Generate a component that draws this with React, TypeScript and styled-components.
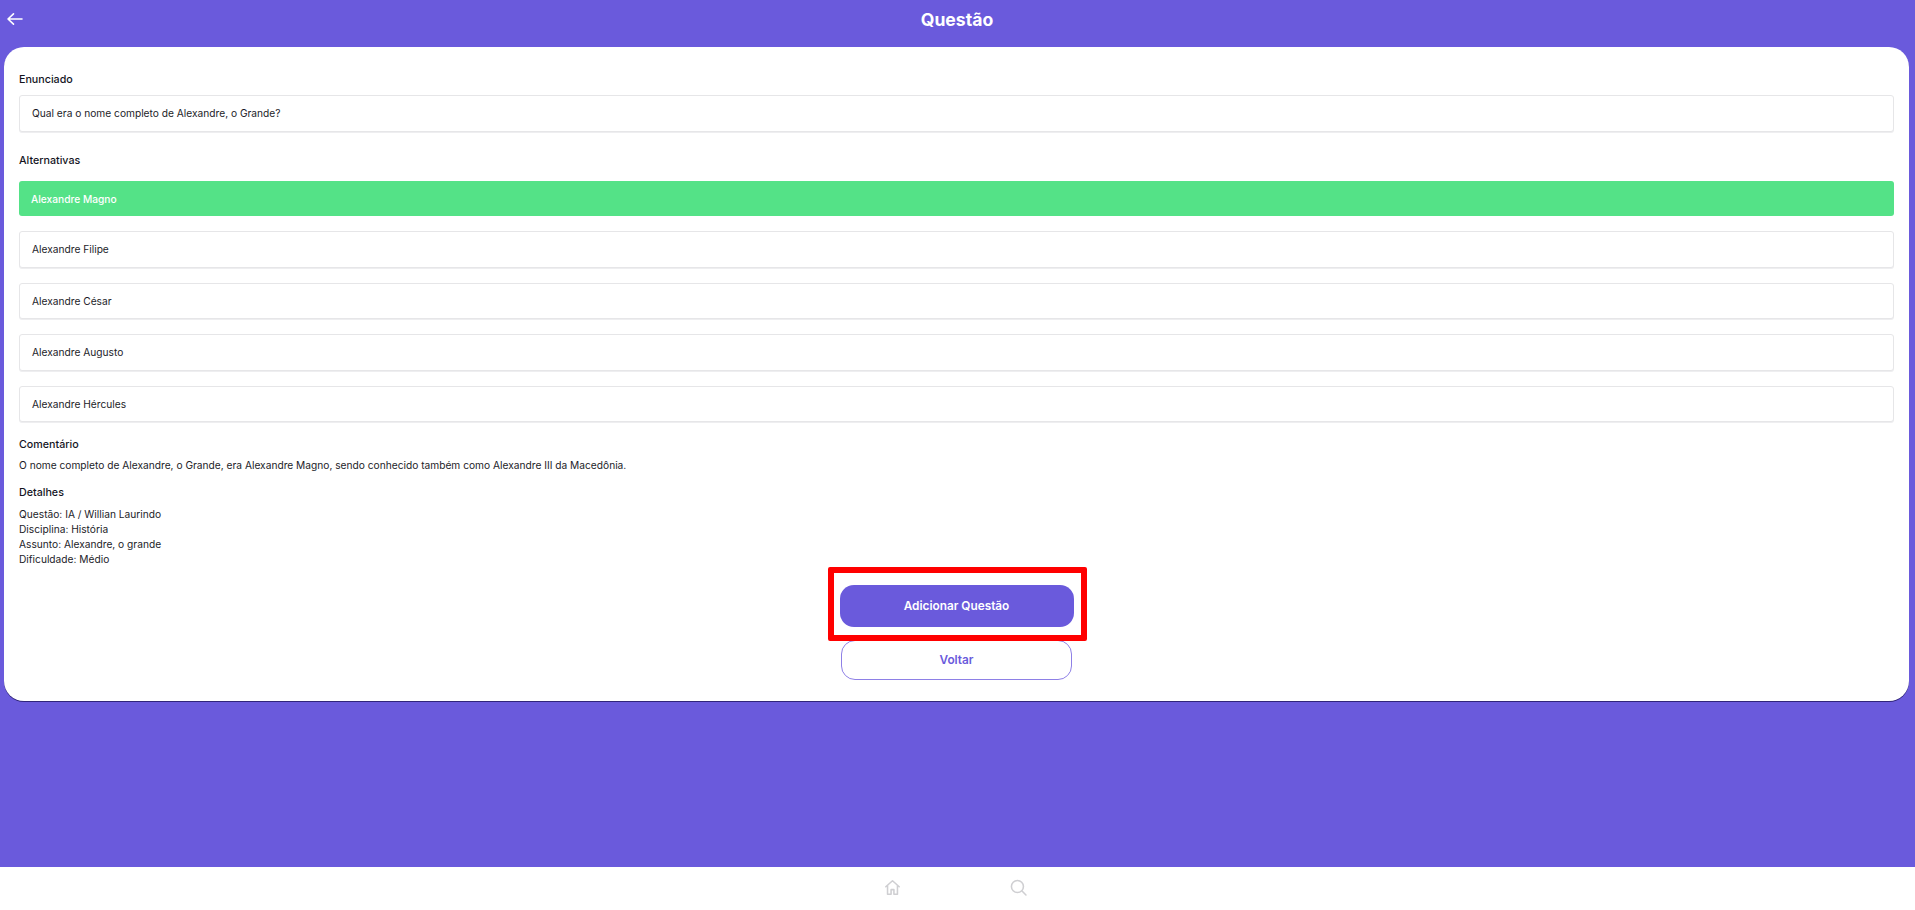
import React from "react";
import styled, { createGlobalStyle } from "styled-components";

const Global = createGlobalStyle`
  html, body { margin: 0; padding: 0; height: 100%; }
  body { font-family: Inter, Roboto, "Liberation Sans", sans-serif; background: #6a5adc; }
  * { box-sizing: border-box; }
`;

const Page = styled.div`
  width: 100%;
  height: 910px;
  display: flex;
  flex-direction: column;
  background: #6a5adc;
  overflow: hidden;
`;

const Header = styled.header`
  position: relative;
  height: 47px;
  flex: none;
  display: flex;
  align-items: center;
  justify-content: center;
  color: #fff;
`;

const Back = styled.button`
  position: absolute;
  left: 6px;
  top: 9px;
  width: 18px;
  height: 22px;
  padding: 0;
  border: 0;
  background: none;
  color: #fff;
`;

const Title = styled.h1`
  margin: 0 1px 9px 0;
  font-size: 17.6px;
  font-weight: 700;
`;

const Main = styled.main`
  flex: 1;
  padding: 0 6px 0 4px;
`;

const Card = styled.section`
  height: 654px;
  background: #fff;
  border-radius: 20px;
  box-shadow: 0 1px 0 rgba(30, 20, 90, 0.75);
  padding: 26px 15px 0;
  display: flex;
  flex-direction: column;
  color: #1c1c28;
`;

const Label = styled.h2<{ $mt?: number; $mb?: number }>`
  margin: ${(p) => p.$mt ?? 0}px 0 ${(p) => p.$mb ?? 0}px;
  font-size: 10.7px;
  line-height: 14px;
  font-weight: 500;
  color: #14141e;
`;

const Field = styled.div<{ $mb?: number }>`
  height: 36.5px;
  margin-bottom: ${(p) => p.$mb ?? 0}px;
  padding-left: 12px;
  display: flex;
  align-items: center;
  font-size: 10.2px;
  background: #fff;
  border: 1px solid #e6e6e8;
  box-shadow: 0 1px 0 #eeeef0;
  border-radius: 3px;
`;

const Correct = styled.div`
  height: 35px;
  margin-bottom: 15px;
  padding-left: 12px;
  display: flex;
  align-items: center;
  font-size: 10.2px;
  font-weight: 500;
  color: #fff;
  background: #54e287;
  border-radius: 3px;
`;

const Text = styled.p`
  margin: 6px 0 0;
  font-size: 10.2px;
  line-height: 14px;
`;

const Details = styled.div`
  margin-top: 7px;
  font-size: 10.2px;
  line-height: 15px;
`;

const Actions = styled.div`
  margin-top: 18px;
  display: flex;
  flex-direction: column;
  align-items: center;
  gap: 13px;
`;

const Primary = styled.button`
  position: relative;
  width: 234px;
  height: 42px;
  border: 0;
  border-radius: 14px;
  background: #6a5adc;
  color: #fff;
  font: 600 11.8px Inter, Roboto, sans-serif;
`;

const Highlight = styled.span`
  position: absolute;
  left: -12px;
  top: -18px;
  width: 259px;
  height: 74px;
  border: 6px solid #ff0000;
  border-radius: 2px;
  pointer-events: none;
`;

const Secondary = styled.button`
  width: 231px;
  height: 40px;
  border: 1px solid #8e80e6;
  border-radius: 14px;
  background: #fff;
  color: #6a5adc;
  font: 600 11.8px Inter, Roboto, sans-serif;
`;

const Footer = styled.nav`
  height: 43px;
  flex: none;
  background: #fff;
  display: flex;
  align-items: center;
  justify-content: center;
  gap: 109px;
  padding: 0 5px 2px 0;
  color: #cfcfd2;
`;

const alternatives = ["Alexandre Filipe", "Alexandre César", "Alexandre Augusto"];

export default function App() {
  return (
    <Page>
      <Global />
      <Header>
        <Back aria-label="Voltar">
          <svg width="18" height="14" viewBox="0 0 18 14" fill="none" stroke="currentColor" strokeWidth="1.6" strokeLinecap="round" strokeLinejoin="round">
            <path d="M16 7H2M7.5 1.8 2 7l5.5 5.2" />
          </svg>
        </Back>
        <Title>Questão</Title>
      </Header>
      <Main>
        <Card>
          <Label $mb={8}>Enunciado</Label>
          <Field $mb={22.5}>Qual era o nome completo de Alexandre, o Grande?</Field>
          <Label $mb={13}>Alternativas</Label>
          <Correct>Alexandre Magno</Correct>
          {alternatives.map((a) => (
            <Field key={a} $mb={15}>{a}</Field>
          ))}
          <Field>Alexandre Hércules</Field>
          <Label $mt={16}>Comentário</Label>
          <Text>O nome completo de Alexandre, o Grande, era Alexandre Magno, sendo conhecido também como Alexandre III da Macedônia.</Text>
          <Label $mt={14}>Detalhes</Label>
          <Details>
            <div>Questão: IA / Willian Laurindo</div>
            <div>Disciplina: História</div>
            <div>Assunto: Alexandre, o grande</div>
            <div>Dificuldade: Médio</div>
          </Details>
          <Actions>
            <Primary>
              Adicionar Questão
              <Highlight />
            </Primary>
            <Secondary>Voltar</Secondary>
          </Actions>
        </Card>
      </Main>
      <Footer>
        <svg width="17" height="17" viewBox="0 0 24 24" fill="none" stroke="currentColor" strokeWidth="2.2" strokeLinecap="round" strokeLinejoin="round">
          <path d="M2.5 11 12 2.5l9.5 8.5M5 9v12.5h5V15h4v6.5h5V9" />
        </svg>
        <svg width="17" height="17" viewBox="0 0 24 24" fill="none" stroke="currentColor" strokeWidth="2.2" strokeLinecap="round" strokeLinejoin="round">
          <circle cx="10.5" cy="10.5" r="8.5" />
          <path d="m17 17 5.5 5.5" />
        </svg>
      </Footer>
    </Page>
  );
}
